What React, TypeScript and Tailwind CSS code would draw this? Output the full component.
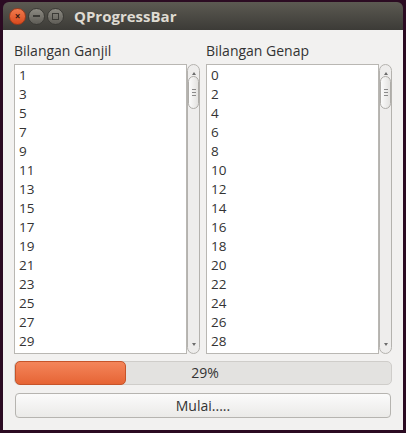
import React from 'react';

const odd = Array.from({ length: 15 }, (_, i) => i * 2 + 1);
const even = Array.from({ length: 15 }, (_, i) => i * 2);

const ScrollBar: React.FC = () => (
  <div className="w-[13px] h-full rounded-full border border-[#b4b2ae] bg-[#eeedec] flex flex-col items-center">
    <div className="h-[10px] flex items-end justify-center">
      <div className="w-0 h-0 border-l-[2.5px] border-r-[2.5px] border-b-[3px] border-l-transparent border-r-transparent border-b-[#6c6c6c]" />
    </div>
    <div className="mt-[1px] w-[11px] h-[33px] rounded-full border border-[#aeaca8] bg-gradient-to-r from-[#fbfbfb] to-[#e4e3e1] flex flex-col items-center justify-center gap-[2px]">
      <div className="w-[4px] h-px bg-[#8a8a8a]" />
      <div className="w-[4px] h-px bg-[#8a8a8a]" />
      <div className="w-[4px] h-px bg-[#8a8a8a]" />
    </div>
    <div className="flex-1" />
    <div className="h-[10px] flex items-start justify-center">
      <div className="w-0 h-0 border-l-[2.5px] border-r-[2.5px] border-t-[3px] border-l-transparent border-r-transparent border-t-[#6c6c6c]" />
    </div>
  </div>
);

const NumberList: React.FC<{ title: string; items: number[] }> = ({ title, items }) => (
  <div className="flex flex-col">
    <div className="h-[23px] text-[14px] leading-[17px] text-[#333333] pt-[1px]">{title}</div>
    <div className="flex h-[290px]">
      <div className="flex-1 border border-[#b9b7b3] bg-white overflow-hidden pt-[1px]">
        {items.map(n => (
          <div key={n} className="h-[19px] leading-[19px] pl-[4px] text-[13.5px] text-[#333333]">{n}</div>
        ))}
      </div>
      <ScrollBar />
    </div>
  </div>
);

const App: React.FC = () => {
  return (
    <div className="w-[406px] h-[433px] bg-[#2b0b22] pt-[2px] pl-[3px]" style={{ fontFamily: '"Open Sans", "Liberation Sans", sans-serif' }}>
      <div className="w-[400px] h-[428px] flex flex-col">
        <div className="h-[28px] rounded-t-[6px] bg-gradient-to-b from-[#5c5a52] to-[#3c3b37] flex items-center pl-[6px]">
          <div className="w-[17px] h-[17px] rounded-full bg-gradient-to-b from-[#f07a4c] to-[#d9491c] border border-[#9c3a1b] flex items-center justify-center text-[#3a1a10] text-[10px] font-bold leading-none">×</div>
          <div className="ml-[2px] w-[17px] h-[17px] rounded-full bg-gradient-to-b from-[#8c8a82] to-[#5f5d57] border border-[#3a3935] flex items-center justify-center">
            <div className="w-[7px] h-[2px] bg-[#3b3a36]" />
          </div>
          <div className="ml-[2px] w-[17px] h-[17px] rounded-full bg-gradient-to-b from-[#8c8a82] to-[#5f5d57] border border-[#3a3935] flex items-center justify-center">
            <div className="w-[7px] h-[7px] border border-[#3b3a36]" />
          </div>
          <div className="ml-[10px] text-[15px] font-bold text-[#dfdbd2]">QProgressBar</div>
        </div>
        <div className="flex-1 bg-[#f2f1f0] px-[11px] pt-[11px]">
          <div className="grid grid-cols-2 gap-[6px]">
            <NumberList title="Bilangan Ganjil" items={odd} />
            <NumberList title="Bilangan Genap" items={even} />
          </div>
          <div className="mt-[7px] h-[24px] rounded-[5px] border border-[#cfcdca] bg-[#e3e2e0] relative">
            <div className="absolute left-0 top-[-1px] h-[24px] w-[111px] rounded-[5px] border border-[#c6542a] bg-gradient-to-b from-[#f4855a] to-[#e66434]" />
            <div className="relative text-center text-[14px] leading-[22px] text-[#333333] pl-[4px]">29%</div>
          </div>
          <div className="mt-[8px] mx-[1px] h-[25px] rounded-[4px] border border-[#b6b4b0] bg-gradient-to-b from-[#fbfbfb] to-[#ebeae8] text-center text-[14px] leading-[23px] text-[#333333]">Mulai.....</div>
        </div>
      </div>
    </div>
  );
};

export default App;
